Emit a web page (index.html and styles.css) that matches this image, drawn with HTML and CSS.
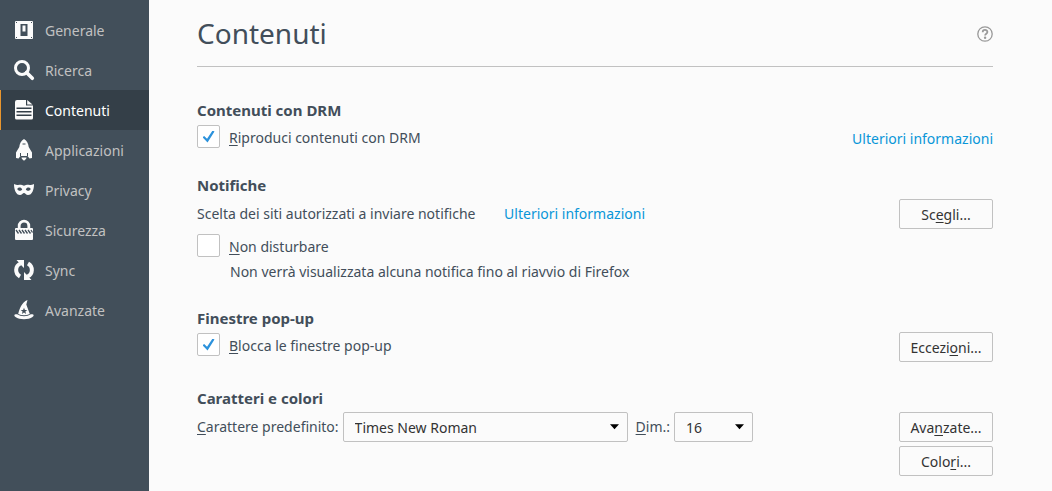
FILE: index.html
```html
<!DOCTYPE html>
<html lang="it">
<head>
<meta charset="utf-8">
<title>Contenuti</title>
<link rel="stylesheet" href="styles.css">
</head>
<body>
<nav class="sidebar">
  <a class="item" href="#generale">
    <svg class="icon" viewBox="0 0 20 20"><path fill-rule="evenodd" d="M2 1h16a1 1 0 0 1 1 1v16a1 1 0 0 1-1 1H2a1 1 0 0 1-1-1V2a1 1 0 0 1 1-1zM2 2v1h1V2zM17 2v1h1V2zM2 17v1h1v-1zM17 17v1h1v-1zM6.500 4v12h7V4zM8.500 5.500h3v6h-3z"/></svg>
    <span>Generale</span></a>
  <a class="item" href="#ricerca">
    <svg class="icon" viewBox="0 0 20 20"><circle cx="8" cy="8" r="6.500" fill="none" stroke="currentColor" stroke-width="3"/><path d="M12.500 12.500L18.300 18.300" stroke="currentColor" stroke-width="3.600" stroke-linecap="round"/></svg>
    <span>Ricerca</span></a>
  <a class="item active" href="#contenuti" aria-current="page">
    <svg class="icon" viewBox="0 0 20 20"><path fill-rule="evenodd" d="M3 0h9v5.500h7V18a1.500 1.500 0 0 1-1.500 1.500h-15A1.500 1.500 0 0 1 1 18V2a2 2 0 0 1 2-2zM2.500 7.500v1.500h15V7.500zM2.500 11v1.500h15V11zM2.500 14.500v1.500h15v-1.500z"/><path d="M13.200 0L18.500 4.500h-5.300z"/></svg>
    <span>Contenuti</span></a>
  <a class="item" href="#applicazioni">
    <svg class="icon" viewBox="0 0 20 20"><path d="M10 -1c3 1.800 4.500 5 4.700 8L18 12.500V18l-2.500.5-2-2.500h-7l-2 2.500L2 18v-5.500L5.300 7C5.500 4 7 .8 10-1z"/><path d="M7.500 17.500h5c0 1.300-1.300 2.300-2.500 3.200-1.200-.9-2.500-1.900-2.500-3.200z"/><path class="cut" d="M8.500 3.500h3v1h-3zM6 13h1v3H6zM13 13h1v3h-1z"/></svg>
    <span>Applicazioni</span></a>
  <a class="item" href="#privacy">
    <svg class="icon" viewBox="0 0 20 20"><path d="M0 4c3 1.500 5 .8 7 .8 1.500 0 2.200.9 3 .9s1.500-.9 3-.9c2 0 4 .7 7-.8 0 6-2 11-6 11-2 0-2.800-2-4-2s-2 2-4 2c-4 0-6-5-6-11z"/><path class="cut" d="M3.200 9c1.500-2 3.800-2 5 .5-1.300 1.800-4 1.700-5-.5zM16.800 9c-1.500-2-3.800-2-5 .5 1.300 1.800 4 1.700 5-.5z"/></svg>
    <span>Privacy</span></a>
  <a class="item" href="#sicurezza">
    <svg class="icon" viewBox="0 0 20 20"><path d="M5.200 9V6a4.800 4.800 0 0 1 9.600 0V9" fill="none" stroke="currentColor" stroke-width="2.800"/><rect x="1" y="8" width="18" height="12" rx="1"/><path class="cutline" d="M2 10l2.500 3.500M5 10l2.500 3.500M8 10l2.500 3.500M11 10l2.500 3.500M14 10l2.500 3.500M17 10l1.500 2.500"/></svg>
    <span>Sicurezza</span></a>
  <a class="item" href="#sync">
    <svg class="icon" viewBox="0 0 20 20"><path d="M6.500 3.500C.8 6 .8 13.500 6 16.500M13.500 16.500C19.200 14 19.200 6.500 14 3.500" fill="none" stroke="currentColor" stroke-width="4"/><path d="M2.500 0H10v8L7.500 5.500zM17.500 20H10v-8l2.500 2.500z"/></svg>
    <span>Sync</span></a>
  <a class="item" href="#avanzate">
    <svg class="icon" viewBox="0 0 20 20"><path d="M13.500 0L12.300 4.500 15.800 14c-3.600 1.600-8 1.600-11.600 0C5.500 9 7.500 2.500 13.500 0z"/><path d="M3.200 14.300C-.5 14 0 16 1.500 17c4 3 13 3 17 0 1.500-1 2-3-1.700-2.700-3.600 2.500-10 2.500-13.600 0z"/><path class="cut" d="M10 7.800l.9 2.200 2.400.1-1.900 1.500.7 2.300-2.100-1.300-2.100 1.300.7-2.300-1.900-1.500 2.400-.1z"/></svg>
    <span>Avanzate</span></a>
</nav>
<main class="content">
  <header class="header">
    <h1>Contenuti</h1>
    <button class="help" type="button" aria-label="Aiuto">
      <svg class="help-icon" viewBox="0 0 16 16"><circle cx="8" cy="8" r="7.200" fill="none" stroke="#999" stroke-width="1.300"/><path d="M5.700 6.200C5.700 3.200 10.400 3.200 10.400 6c0 1.700-2.300 1.700-2.300 3.500" fill="none" stroke="#999" stroke-width="1.800"/><circle cx="8.100" cy="11.800" r="1.200" fill="#999"/></svg>
    </button>
  </header>

  <section class="group">
    <h2>Contenuti con DRM</h2>
    <div class="row">
      <label class="check"><input type="checkbox" checked><span><u>R</u>iproduci contenuti con DRM</span></label>
      <a class="link" href="#drm">Ulteriori informazioni</a>
    </div>
  </section>

  <section class="group">
    <h2>Notifiche</h2>
    <div class="row">
      <p class="notice">Scelta dei siti autorizzati a inviare notifiche <a class="link" href="#notifiche">Ulteriori informazioni</a></p>
      <button class="button" type="button">Sc<u>e</u>gli...</button>
    </div>
    <label class="check"><input type="checkbox" aria-describedby="dnd-note"><span><u>N</u>on disturbare</span></label>
    <p class="note" id="dnd-note">Non verrà visualizzata alcuna notifica fino al riavvio di Firefox</p>
  </section>

  <section class="group">
    <h2>Finestre pop-up</h2>
    <div class="row">
      <label class="check"><input type="checkbox" checked><span><u>B</u>locca le finestre pop-up</span></label>
      <button class="button" type="button">Eccezi<u>o</u>ni...</button>
    </div>
  </section>

  <section class="group">
    <h2>Caratteri e colori</h2>
    <div class="row">
      <div class="fonts">
        <label for="font"><u>C</u>arattere predefinito:</label>
        <span class="select family"><select id="font"><option>Times New Roman</option></select><svg class="arrow" viewBox="0 0 10 6"><path d="M0 0h10L5 5.500z"/></svg></span>
        <label class="size-label" for="size"><u>D</u>im.:</label>
        <span class="select size"><select id="size"><option>16</option></select><svg class="arrow" viewBox="0 0 10 6"><path d="M0 0h10L5 5.500z"/></svg></span>
      </div>
      <div class="stack">
        <button class="button" type="button">Ava<u>n</u>zate...</button>
        <button class="button" type="button">Colo<u>r</u>i...</button>
      </div>
    </div>
  </section>
</main>
</body>
</html>
```
FILE: styles.css
```css
* { box-sizing: border-box; }

body {
  margin: 0;
  min-height: 100vh;
  display: flex;
  background: #fbfbfb;
  color: #424e5a;
  font: 14px/20px "Noto Sans", "Open Sans", sans-serif;
}

h1, h2, p { margin: 0; }
button, select, input { font: inherit; margin: 0; }
u { text-underline-offset: 2px; text-decoration-thickness: 1px; text-decoration-skip-ink: none; }

.sidebar {
  flex: none;
  width: 149px;
  padding-top: 10px;
  background: #424f5a;
}

.item {
  display: flex;
  align-items: center;
  gap: 11px;
  height: 40px;
  padding-left: 13px;
  border-left: 1px solid transparent;
  color: #c1c1c1;
  text-decoration: none;
}
.item span { padding-top: 2px; }
.item.active {
  background: #343f48;
  border-left-color: #e8962e;
  color: #fff;
}
.icon { width: 20px; height: 20px; fill: currentColor; color: #fbfbfb; overflow: visible; }
.cut { fill: #424f5a; }
.cutline { fill: none; stroke: #424f5a; stroke-width: 1.3; }

.content {
  flex: 1;
  display: flex;
  flex-direction: column;
  gap: 26px;
  padding: 0 59px 15px 48px;
}

.header {
  display: flex;
  align-items: center;
  justify-content: space-between;
  height: 67px;
  padding-top: 2px;
  margin-bottom: 7px;
  border-bottom: 1px solid #c1c1c1;
}
h1 { padding-bottom: 2px; font-size: 28px; line-height: 40px; font-weight: 400; }
.help { display: flex; padding: 0; border: 0; background: none; }
.help-icon { width: 16px; height: 16px; }

.group { display: flex; flex-direction: column; gap: 4px; }
h2 { font-size: 15px; line-height: 20px; font-weight: 700; }

.row { display: flex; align-items: flex-start; justify-content: space-between; }
.link { color: #0996d8; text-decoration: none; line-height: 30px; }
.row > .link { height: 25px; }
.notice { line-height: 30px; }
.notice .link { margin-left: 25px; }
.note { padding-left: 33px; }

.check { display: flex; align-items: center; gap: 9px; min-height: 25px; }
.check span { padding-top: 2px; }
.check input {
  appearance: none;
  display: grid;
  place-items: center;
  width: 23px;
  height: 23px;
  border: 1px solid #c1c1c1;
  border-radius: 2px;
  background: #fff;
}
.check input:checked::before {
  content: "";
  width: 12px;
  height: 12px;
  background: #2c92dc;
  clip-path: polygon(0 56%, 14% 46%, 38% 68%, 84% 0, 100% 9%, 42% 100%);
}

.button {
  min-width: 94px;
  height: 30px;
  padding: 1px 10px 0;
  border: 1px solid #c1c1c1;
  border-radius: 2px;
  background: #fbfbfb;
  color: #333;
}
.stack { display: flex; flex-direction: column; gap: 4px; }

.fonts { display: flex; align-items: center; gap: 4px; }
.size-label { margin-left: 4px; }
.select { position: relative; display: flex; }
.select select {
  appearance: none;
  width: 100%;
  height: 30px;
  padding: 2px 26px 0 11px;
  border: 1px solid #c1c1c1;
  border-radius: 2px;
  background: #fbfbfb;
  color: #333;
}
.family { width: 285px; }
.size { width: 79px; }
.arrow {
  position: absolute;
  right: 9px;
  top: 12px;
  width: 9px;
  height: 6px;
  pointer-events: none;
}
```
